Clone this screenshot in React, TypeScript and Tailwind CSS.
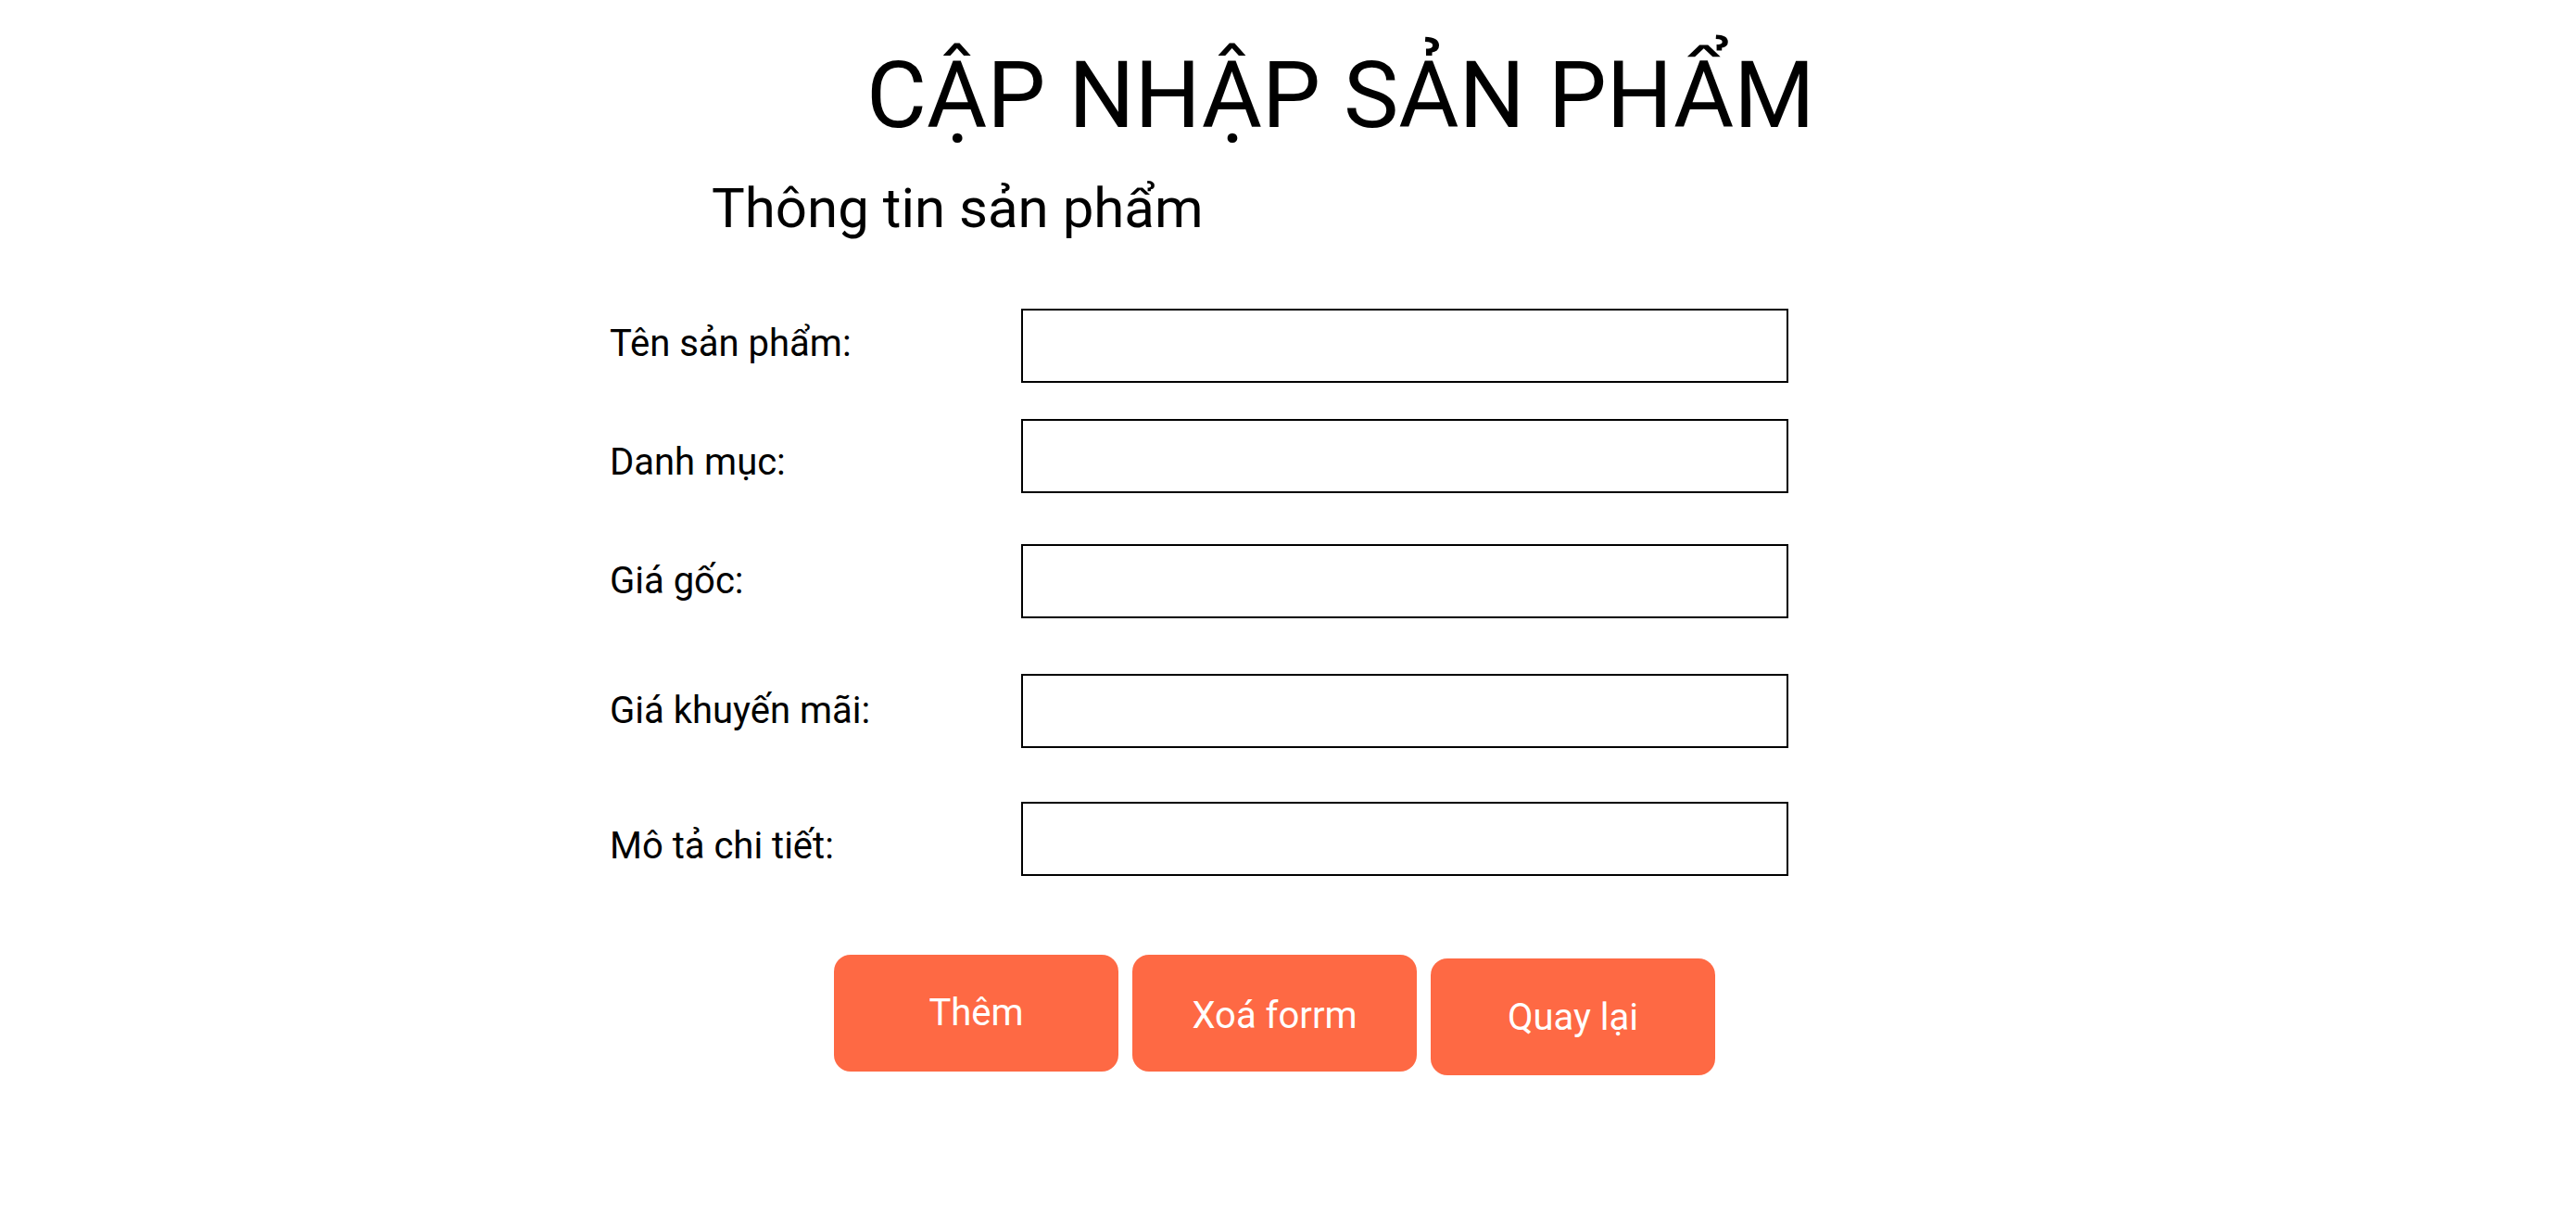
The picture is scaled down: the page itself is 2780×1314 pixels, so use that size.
const fields = [
  { label: 'Tên sản phẩm:', mt: 'mt-[78px]', shift: '-translate-y-[2px]' },
  { label: 'Danh mục:', mt: 'mt-[39px]', shift: 'translate-y-[7px]' },
  { label: 'Giá gốc:', mt: 'mt-[55px]', shift: 'translate-y-0' },
  { label: 'Giá khuyến mãi:', mt: 'mt-[60px]', shift: 'translate-y-0' },
  { label: 'Mô tả chi tiết:', mt: 'mt-[58px]', shift: 'translate-y-[8px]' },
];

const buttons = [
  { text: 'Thêm', mt: 'mt-0', shift: 'translate-y-0' },
  { text: 'Xoá forrm', mt: 'mt-0', shift: 'translate-y-[3px]' },
  { text: 'Quay lại', mt: 'mt-[4px]', shift: 'translate-y-[1px]' },
];

export default function App() {
  return (
    <div className="min-h-[1314px] w-full bg-white text-black font-['Roboto',sans-serif]">
      <div className="ml-[658px] flex w-[1272px] flex-col pt-[53px]">
        <h1 className="ml-[277px] text-[100px] font-normal leading-none whitespace-nowrap">
          CẬP NHẬP SẢN PHẨM
        </h1>
        <h2 className="ml-[110px] mt-[42px] text-[60px] font-normal leading-none whitespace-nowrap">
          Thông tin sản phẩm
        </h2>

        <form className="flex flex-col" onSubmit={(e) => e.preventDefault()}>
          {fields.map((f) => (
            <div key={f.label} className={`flex items-center ${f.mt}`}>
              <label className={`w-[444px] text-[40px] leading-none ${f.shift}`}>{f.label}</label>
              <input
                type="text"
                className="h-[80px] w-[828px] border-2 border-black bg-white px-3 text-[32px] outline-none"
              />
            </div>
          ))}

          <div className="ml-[242px] mt-[85px] flex items-start gap-[15px]">
            {buttons.map((b) => (
              <button
                key={b.text}
                type="button"
                className={`flex h-[126px] w-[307px] items-center justify-center rounded-[18px] bg-[#fe6944] text-[40px] leading-none text-white ${b.mt}`}
              >
                <span className={b.shift}>{b.text}</span>
              </button>
            ))}
          </div>
        </form>
      </div>
    </div>
  );
}
